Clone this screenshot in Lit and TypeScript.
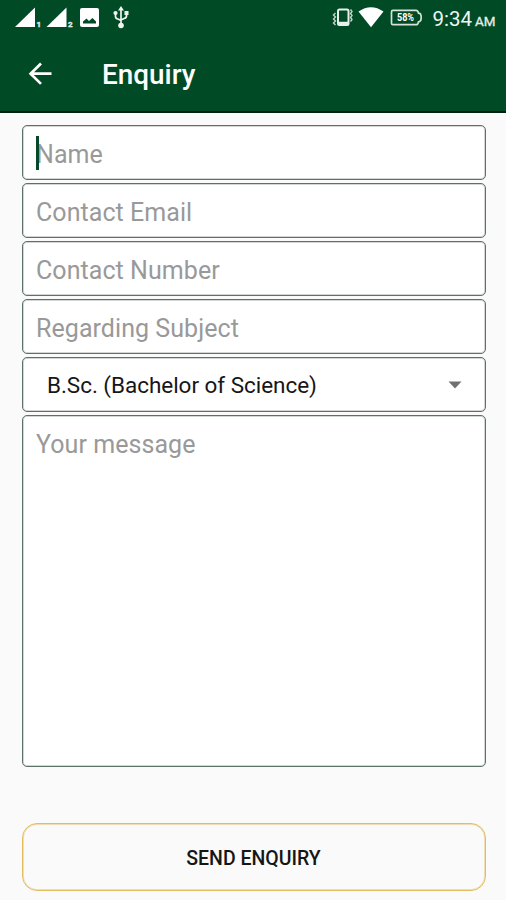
import { LitElement, html, css, svg } from "lit";
import { customElement, property } from "lit/decorators.js";

@customElement("status-bar")
class StatusBar extends LitElement {
  static styles = css`
    :host { display: block; height: 35px; color: #fff; }
    svg { display: block; width: 506px; height: 35px; font-family: Roboto, sans-serif; }
    .tiny { font-size: 8px; font-weight: 700; }
    .charge { font-size: 10px; font-weight: 700; }
    .time { font-size: 21px; }
    .ampm { font-size: 13.5px; }
  `;
  render() {
    const signal = (x: number, n: string) => svg`
      <path d="M${x} 27L${x + 20} 7.5V27Z" fill="#fff"/>
      <text class="tiny" x=${x + 21.5} y="26.5" fill="#e4ede7" stroke="#e4ede7" stroke-width="0.4">${n}</text>`;
    return html`<svg viewBox="0 0 506 35" fill="none">
      ${signal(15, "1")}${signal(46.5, "2")}
      <rect x="80" y="8" width="19" height="19" rx="2" fill="#fff"/>
      <path d="M83 23.5V21.5L86.5 18.5L89 21L92.5 18L96 21.5V23.5Z" fill="#004b25"/>
      <g stroke="#eef4f0" stroke-width="1.7">
        <path d="M121 9V26M115.5 13V16.5Q115.5 18.5 118 19L121 20.5M126.5 13V16Q126.5 18 124 18.5L121 20"/>
      </g>
      <path d="M121 6L124 10.5H118ZM124.5 11H128.5V15H124.5Z" fill="#eef4f0"/>
      <circle cx="115.5" cy="13" r="2.1" fill="#eef4f0"/>
      <circle cx="121" cy="25.5" r="2.8" fill="#eef4f0"/>
      <rect x="338" y="9.5" width="10.5" height="15.5" rx="1.5" stroke="#e8f0eb" stroke-width="2"/>
      <path d="M338 23.5H348.5" stroke="#e8f0eb" stroke-width="3.5"/>
      <path d="M335.5 13L333.5 15L335.5 17L333.5 19L335.5 21L333.5 23L335.5 25M350.5 9.5L352 11.5L350.5 13.5L352 15.5L350.5 17.5L352 19.5L350.5 21.5" stroke="#c4d6cb" stroke-width="1.4"/>
      <path d="M358.5 11.5Q371 3 383.5 11.5L371 27.3Z" fill="#fff"/>
      <path d="M393 10.3H416Q418 10.3 418.5 13.2Q421.2 13.2 421.2 17.5Q421.2 21.8 418.5 21.8Q418 24.7 416 24.7H393Q391.5 24.7 391.5 23.2V11.8Q391.5 10.3 393 10.3Z" stroke="#d5e3da" stroke-width="1.7"/>
      <text class="charge" x="397" y="21.2" textLength="17" lengthAdjust="spacingAndGlyphs" fill="#fff">58%</text>
      <text class="time" x="432.5" y="25.5" textLength="39.5" lengthAdjust="spacingAndGlyphs" fill="#f1f6f3">9:34</text>
      <text class="ampm" x="475" y="25.5" textLength="20.5" lengthAdjust="spacingAndGlyphs" fill="#e6eee9" stroke="#e6eee9" stroke-width="0.3">AM</text>
    </svg>`;
  }
}

@customElement("form-field")
class FormField extends LitElement {
  @property() label = "";
  @property({ type: Boolean }) active = false;
  @property({ type: Boolean }) select = false;
  static styles = css`
    :host { display: flex; height: 55px; box-sizing: border-box; border: 1px solid #5d7167; border-radius: 5px;
      box-shadow: inset 0 0 0 1px rgba(93, 113, 103, 0.28); background: #fff; align-items: center; padding: 0 13px; position: relative; }
    :host([multiline]) { height: 352px; align-items: flex-start; padding-top: 10px; }
    .label { font-size: 25px; line-height: 30px; letter-spacing: 0.06px; color: #999; white-space: nowrap; padding: 4px 0 0 0.5px; }
    .value { font-size: 22.5px; line-height: 30px; letter-spacing: -0.04px; color: #161616; flex: 1; padding: 1px 0 0 11.5px; white-space: nowrap; }
    .caret { position: absolute; left: 13px; top: 10px; width: 3px; height: 34px; background: #07482a; }
    .arrow { width: 14px; height: 8px; margin-right: 9.5px; }
  `;
  render() {
    return this.select
      ? html`<span class="value">${this.label}</span>
          <svg class="arrow" viewBox="0 0 14 8"><path d="M0.5 0.5H13.5L7 7.5Z" fill="#707070"/></svg>`
      : html`${this.active ? html`<i class="caret"></i>` : ""}<span class="label">${this.label}</span>`;
  }
}

@customElement("app-root")
class AppRoot extends LitElement {
  static styles = css`
    :host { display: flex; flex-direction: column; height: 900px; background: #fafafa; font-family: Roboto, sans-serif; overflow: hidden; }
    header { background: #004b25; height: 113px; box-sizing: border-box; border-bottom: 2px solid #00200f; flex: none; }
    .bar { display: flex; align-items: center; height: 78px; }
    .back { width: 24px; height: 24px; margin-left: 28px; }
    .title { margin: 2px 0 0 50px; font-size: 27.9px; line-height: 32px; font-weight: 500; color: #fff; }
    main { display: flex; flex-direction: column; gap: 3px; padding: 12px 20.5px 0 21.5px; }
    .send { margin-top: 53px; height: 68px; box-sizing: border-box; border: 1px solid #e3bd5e; border-radius: 15px; font: 500 19.5px/24px Roboto, sans-serif;
      box-shadow: inset 0 0 0 1px rgba(227, 189, 94, 0.45); background: #fafafa; color: #161616; padding: 3px 0 0; }
  `;
  render() {
    return html`
      <header>
        <status-bar></status-bar>
        <div class="bar">
          <svg class="back" viewBox="0 0 24 24" fill="none" stroke="#fff" stroke-width="2.7"><path d="M23.5 11.7H3M13 1.5L2.6 11.7L13 21.9"/></svg>
          <span class="title">Enquiry</span>
        </div>
      </header>
      <main>
        <form-field label="Name" active></form-field>
        <form-field label="Contact Email"></form-field>
        <form-field label="Contact Number"></form-field>
        <form-field label="Regarding Subject"></form-field>
        <form-field label="B.Sc. (Bachelor of Science)" select></form-field>
        <form-field label="Your message" multiline></form-field>
        <button class="send">SEND ENQUIRY</button>
      </main>`;
  }
}
